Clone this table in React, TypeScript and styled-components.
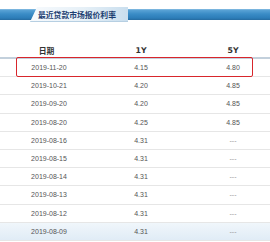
import React from "react";
import styled, { createGlobalStyle } from "styled-components";

const Global = createGlobalStyle`
  html, body { margin: 0; padding: 0; background: #ffffff; overflow: hidden; }
  body { width: 270px; height: 242px; font-family: "Liberation Sans", "Noto Sans CJK SC", sans-serif; }
`;

const Page = styled.div`
  width: 270px;
  height: 242px;
  overflow: hidden;
  padding-top: 7px;
  box-sizing: border-box;
`;

const Banner = styled.div`
  display: flex;
  height: 15px;
  background: linear-gradient(
    to bottom,
    #ffffff 0,
    #ffffff 1.5px,
    #b9d8ee 1.5px,
    #5aa3d6 3px,
    #3a8cc6 7px,
    #2c7db8 11px,
    #256aa0 13px,
    #ffffff 13.5px,
    #ffffff 15px
  );
`;

const Tab = styled.div`
  margin-left: 30px;
  width: 98px;
  height: 15px;
  display: flex;
  align-items: center;
  padding-left: 8px;
  box-sizing: border-box;
  clip-path: polygon(7px 0, 100% 0, 100% 100%, 0 100%);
  background: linear-gradient(to right, #f7fafd 0%, #e6f0f7 55%, #c9deee 100%);
  box-shadow: inset 0 -1px 0 #b6cfe2;
  font-family: "Noto Sans CJK SC", sans-serif;
  font-size: 7.8px;
  font-weight: 600;
  color: #1d3f72;
  white-space: nowrap;
`;

const Table = styled.div`
  margin-top: 21px;
  display: flex;
  flex-direction: column;
`;

const HeaderRow = styled.div`
  display: grid;
  grid-template-columns: 92px 92px 92px;
  padding-left: 3px;
  height: 14px;
  align-items: center;
  border-bottom: 2px solid #c3d0dc;
`;

const HeadCell = styled.div<{ $shift?: number }>`
  text-align: center;
  padding-right: ${(p) => (p.$shift ? `${p.$shift}px` : "0")};
  font-family: "DejaVu Sans", "Noto Sans CJK SC", sans-serif;
  font-weight: bold;
  font-size: 7.8px;
  color: #333333;
`;

const Row = styled.div<{ $hover?: boolean }>`
  position: relative;
  display: grid;
  grid-template-columns: 92px 92px 92px;
  padding-left: 3px;
  height: 18.2px;
  box-sizing: border-box;
  align-items: center;
  border-bottom: 1px solid #e6e6e6;
  background: ${(p) =>
    p.$hover ? "linear-gradient(to bottom, #f0f6fb, #e0ecf6)" : "transparent"};
`;

const Cell = styled.div<{ $muted?: boolean }>`
  text-align: center;
  font-family: "Liberation Sans", sans-serif;
  font-size: 7px;
  color: ${(p) => (p.$muted ? "#9a9a9a" : "#555555")};
`;

const Highlight = styled.div`
  position: absolute;
  left: 16px;
  width: 237px;
  top: -2px;
  bottom: -1px;
  border: 1.5px solid #d8262c;
  border-radius: 2px;
  box-sizing: border-box;
  pointer-events: none;
`;

const rows: [string, string, string][] = [
  ["2019-11-20", "4.15", "4.80"],
  ["2019-10-21", "4.20", "4.85"],
  ["2019-09-20", "4.20", "4.85"],
  ["2019-08-20", "4.25", "4.85"],
  ["2019-08-16", "4.31", "---"],
  ["2019-08-15", "4.31", "---"],
  ["2019-08-14", "4.31", "---"],
  ["2019-08-13", "4.31", "---"],
  ["2019-08-12", "4.31", "---"],
  ["2019-08-09", "4.31", "---"],
];

export default function App() {
  return (
    <Page>
      <Global />
      <Banner>
        <Tab>最近贷款市场报价利率</Tab>
      </Banner>
      <Table>
        <HeaderRow>
          <HeadCell $shift={5}>日期</HeadCell>
          <HeadCell>1Y</HeadCell>
          <HeadCell>5Y</HeadCell>
        </HeaderRow>
        {rows.map((r, i) => (
          <Row key={r[0]} $hover={i === rows.length - 1}>
            <Cell>{r[0]}</Cell>
            <Cell>{r[1]}</Cell>
            <Cell $muted={r[2] === "---"}>{r[2]}</Cell>
            {i === 0 && <Highlight />}
          </Row>
        ))}
      </Table>
    </Page>
  );
}
